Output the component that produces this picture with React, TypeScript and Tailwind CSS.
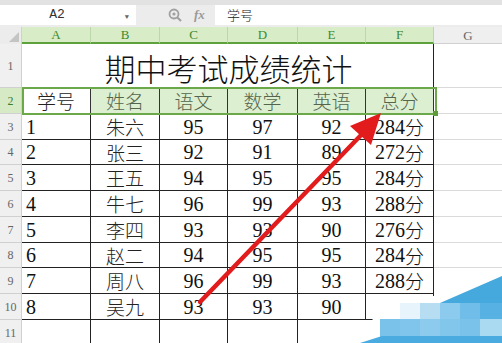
import React from "react";

const serif = "font-['Liberation_Serif','Noto_Sans_CJK_SC',serif]";
const cjk = "font-['Noto_Sans_CJK_SC',sans-serif] font-light";

const cols = ["A", "B", "C", "D", "E", "F"];

const rows: (string | number)[][] = [
  [1, "朱六", 95, 97, 92, "284分"],
  [2, "张三", 92, 91, 89, "272分"],
  [3, "王五", 94, 95, 95, "284分"],
  [4, "牛七", 96, 99, 93, "288分"],
  [5, "李四", 93, 93, 90, "276分"],
  [6, "赵二", 94, 95, 95, "284分"],
  [7, "周八", 96, 99, 93, "288分"],
  [8, "吴九", 93, 93, 90, ""],
];

const heads = ["学号", "姓名", "语文", "数学", "英语", "总分"];

const RowHead = ({ n, active }: { n: number; active?: boolean }) => (
  <div
    className={`flex items-center justify-center border-r border-b border-[#d0d0d0] text-[12px] leading-none ${
      active ? "bg-[#d6eac6] text-[#3f7d2c]" : "bg-[#f0f0f0] text-[#666]"
    }`}
  >
    {n}
  </div>
);

const Gcell = () => <div className="border-b border-[#dadada]" />;

// total like "284分": digits in serif, 分 in light cjk
const Total = ({ v }: { v: string }) =>
  v ? (
    <>
      {v.replace("分", "")}
      <span className={`text-[19px] ${cjk}`}>分</span>
    </>
  ) : null;

export default function App() {
  return (
    <div className={`relative w-[502px] h-[343px] overflow-hidden bg-white ${serif}`}>
      {/* formula bar */}
      <div className="h-[5px] bg-[#e2e2e2]" />
      <div className="flex h-[22px] bg-[#ececec] pb-[2px]">
        <div className="relative flex w-[136px] items-center justify-center bg-white pr-[22px] font-['Liberation_Mono',monospace] text-[13px] text-[#333]">
          A2
          <span className="absolute right-[7px] top-[7px] text-[7px] text-[#666]">▼</span>
        </div>
        <div className="flex w-[79px] items-center gap-[12px] pl-[32px] text-[#9a9a9a]">
          <svg width="14" height="14" viewBox="0 0 14 14">
            <circle cx="6" cy="6" r="4.5" fill="none" stroke="#a0a0a0" strokeWidth="1.8" />
            <circle cx="6" cy="6" r="1.6" fill="#a0a0a0" />
            <line x1="9.2" y1="9.2" x2="13" y2="13" stroke="#a0a0a0" strokeWidth="2" />
          </svg>
          <span className="text-[13px] italic font-bold">fx</span>
        </div>
        <div className={`flex flex-1 items-center bg-white pl-[12px] text-[13px] text-[#222] ${cjk}`}>
          学号
        </div>
      </div>

      {/* column header */}
      <div className="grid h-[17px] grid-cols-[22px_69px_69px_68px_70px_68px_68px_68px]">
        <div className="relative bg-[#ececec] border-r border-[#d0d0d0]">
          <svg className="absolute right-[2px] bottom-[2px]" width="10" height="10">
            <polygon points="10,0 10,10 0,10" fill="#c4c4c4" />
          </svg>
        </div>
        {cols.map((c) => (
          <div
            key={c}
            className="flex items-center justify-center border-r border-[#bcd8aa] border-b-2 border-b-[#5ea23c] bg-[#d8ecc8] text-[13px] leading-none text-[#3d8a2b]"
          >
            {c}
          </div>
        ))}
        <div className="flex items-center justify-center border-b border-[#d0d0d0] bg-[#efefef] text-[13px] leading-none text-[#666]">
          G
        </div>
      </div>

      {/* sheet body */}
      <div className="relative grid grid-cols-[22px_69px_69px_68px_70px_68px_68px_68px] grid-rows-[44px_26px_26px_25px_26px_26px_26px_25px_26px_26px_26px] text-[20px] leading-none text-[#111]">
        <RowHead n={1} />
        <div className={`col-span-6 flex items-center justify-center border-r border-b border-[#222] pl-[2px] pt-[3px] text-[31px] leading-none text-[#111] ${cjk}`}>
          期中考试成绩统计
        </div>
        <Gcell />

        <RowHead n={2} active />
        {heads.map((h, i) => (
          <div
            key={h}
            className={`flex items-center justify-center border-r border-b border-[#333] text-[19px] leading-none ${cjk} ${
              i === 0 ? "bg-white text-[#222]" : "bg-[#dcefd0] text-[#55654d]"
            }`}
          >
            {h}
          </div>
        ))}
        <Gcell />

        {rows.map((r, ri) => (
          <React.Fragment key={ri}>
            <RowHead n={ri + 3} />
            {r.map((v, ci) => (
              <div
                key={ci}
                className={`flex items-center border-r border-b border-[#222] ${
                  ci === 0 ? "justify-start pl-[4px]" : "justify-center"
                } ${ci === 1 ? `text-[19px] text-[#222] ${cjk}` : ""}`}
              >
                {ci === 5 ? <Total v={String(v)} /> : v}
              </div>
            ))}
            <Gcell />
          </React.Fragment>
        ))}

        <RowHead n={11} />
        <div className="border-r border-[#222]" />
        <div className="border-r border-[#222]" />
        <div className="border-r border-[#222]" />
        <div className="border-r border-[#222]" />
        <div />
        <div />
        <div />

        {/* selection frame A2:F2 */}
        <div className="pointer-events-none absolute left-[22px] top-[43px] h-[28px] w-[415px] border-2 border-[#6aa84a]" />
        <div className="pointer-events-none absolute left-[433px] top-[67px] h-[5px] w-[5px] bg-[#5c9c3c]" />
      </div>

      {/* red arrow + watermark overlay */}
      <svg className="pointer-events-none absolute left-0 top-0" width="502" height="343">
        <line x1="200" y1="302" x2="364" y2="132" stroke="#e21c1c" strokeWidth="4.5" strokeLinecap="round" />
        <polygon points="381,113 371,145 350,126" fill="#e21c1c" />
        <polygon points="434,280 502,268 502,343 366,343 378,300 402,296 434,296" fill="#ffffff" />
        <polygon points="440,303 502,276 502,303" fill="#45a9de" />
        <rect x="400" y="303" width="20" height="16" fill="#e8f4fb" />
        <rect x="420" y="303" width="20" height="16" fill="#b6ddf2" />
        <rect x="440" y="303" width="20" height="16" fill="#8dcbee" />
        <rect x="460" y="303" width="20" height="16" fill="#6fbde8" />
        <rect x="480" y="303" width="22" height="16" fill="#57b2e3" />
        <rect x="380" y="319" width="20" height="19" fill="#7bc2ea" />
        <rect x="400" y="319" width="20" height="19" fill="#80c5eb" />
        <rect x="420" y="319" width="20" height="19" fill="#8ccbee" />
        <rect x="440" y="319" width="20" height="19" fill="#83c6ec" />
        <rect x="460" y="319" width="20" height="19" fill="#7bc2ea" />
        <rect x="480" y="319" width="22" height="19" fill="#aad9f2" />
        <polygon points="360,343 382,336 502,336 502,343" fill="#4aabe0" />
      </svg>
    </div>
  );
}
